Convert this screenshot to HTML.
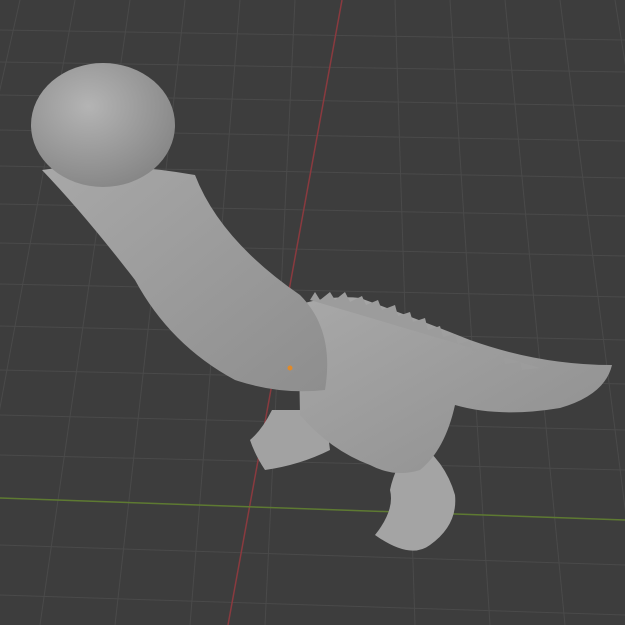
<!DOCTYPE html>
<html><head><style>html,body{margin:0;padding:0;background:#3d3d3d;width:625px;height:625px;overflow:hidden}</style></head>
<body>
<svg width="625" height="625" viewBox="0 0 625 625" xmlns="http://www.w3.org/2000/svg">
<defs>
<radialGradient id="g1" cx="0.4" cy="0.35" r="0.7"><stop offset="0" stop-color="#b4b4b4"/><stop offset="1" stop-color="#858585"/></radialGradient>
<linearGradient id="g2" x1="0" y1="0" x2="1" y2="1"><stop offset="0" stop-color="#a8a8a8"/><stop offset="1" stop-color="#8e8e8e"/></linearGradient>
</defs>
<rect width="625" height="625" fill="#3d3d3d"/>
<g stroke="#4a4a4a" stroke-width="1">
<line x1="0" y1="30" x2="625" y2="40"/><line x1="0" y1="62" x2="625" y2="72"/>
<line x1="0" y1="95" x2="625" y2="106"/><line x1="0" y1="130" x2="625" y2="141"/>
<line x1="0" y1="166" x2="625" y2="178"/><line x1="0" y1="204" x2="625" y2="216"/>
<line x1="0" y1="243" x2="625" y2="256"/><line x1="0" y1="284" x2="625" y2="297"/>
<line x1="0" y1="326" x2="625" y2="340"/><line x1="0" y1="370" x2="625" y2="384"/>
<line x1="0" y1="415" x2="625" y2="430"/><line x1="0" y1="455" x2="625" y2="470"/>
<line x1="0" y1="545" x2="625" y2="565"/><line x1="0" y1="595" x2="625" y2="615"/>
<line x1="20" y1="0" x2="-120" y2="625"/><line x1="75" y1="0" x2="-40" y2="625"/>
<line x1="130" y1="0" x2="40" y2="625"/><line x1="185" y1="0" x2="115" y2="625"/>
<line x1="240" y1="0" x2="190" y2="625"/><line x1="295" y1="0" x2="265" y2="625"/>
<line x1="395" y1="0" x2="415" y2="625"/><line x1="450" y1="0" x2="490" y2="625"/>
<line x1="505" y1="0" x2="565" y2="625"/><line x1="560" y1="0" x2="640" y2="625"/>
<line x1="615" y1="0" x2="715" y2="625"/>
</g>
<line x1="342" y1="0" x2="228" y2="625" stroke="#8a3a3f" stroke-width="1.5"/>
<line x1="0" y1="498" x2="625" y2="520" stroke="#5e7a32" stroke-width="1.5"/>
<!-- legs -->
<path d="M272 410 Q262 430 250 440 Q255 455 265 470 Q300 465 330 450 L325 410 Z" fill="#a2a2a2"/>
<path d="M415 440 Q445 460 455 495 Q458 525 430 545 Q410 560 375 535 Q395 510 390 490 Q395 465 415 440 Z" fill="#a4a4a4"/>
<!-- tail & body -->
<path d="M298 305 Q330 295 360 298 Q420 320 470 340 Q540 365 612 365 Q605 395 560 408 Q500 418 455 405 Q445 450 420 470 Q395 478 370 465 Q330 450 300 415 Z" fill="url(#g2)"/>
<!-- spikes -->
<path d="M310 300 L315 292 L320 300 L330 292 L335 300 L345 292 L350 302 L362 296 L366 305 L378 300 L382 310 L395 305 L398 316 L410 312 L413 322 L425 318 L428 330 L440 326 L443 337 L455 334 L458 344 L470 341 L473 351 L487 348 L489 358 L503 355 L505 364 L520 362 L522 370 L540 368 Z" fill="#9c9c9c"/>
<!-- shaft -->
<path d="M42 170 Q110 160 195 175 Q220 240 300 295 Q335 330 325 390 Q280 395 235 380 Q170 345 135 280 Q85 215 42 170 Z" fill="url(#g2)"/>
<!-- head -->
<ellipse cx="103" cy="125" rx="72" ry="62" fill="url(#g1)"/>
<circle cx="290" cy="368" r="2.5" fill="#e08a2a"/>
</svg>
</body></html>
